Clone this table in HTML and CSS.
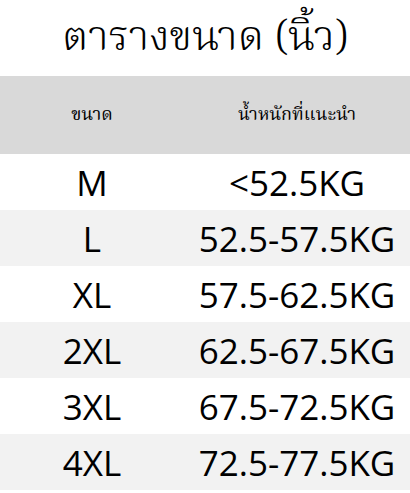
FILE: index.html
```html
<!DOCTYPE html>
<html lang="th">
<head>
<meta charset="utf-8">
<link rel="stylesheet" href="styles.css">
</head>
<body>
<div class="chart">
  <h1 class="title">ตารางขนาด (นิ้ว)</h1>
  <table class="sizes">
    <thead>
      <tr class="head"><th class="c1">ขนาด</th><th class="c2">น้ำหนักที่แนะนำ</th></tr>
    </thead>
    <tbody>
      <tr><td class="c1">M</td><td class="c2">&lt;52.5KG</td></tr>
      <tr class="alt"><td class="c1">L</td><td class="c2">52.5-57.5KG</td></tr>
      <tr><td class="c1">XL</td><td class="c2">57.5-62.5KG</td></tr>
      <tr class="alt"><td class="c1">2XL</td><td class="c2">62.5-67.5KG</td></tr>
      <tr><td class="c1">3XL</td><td class="c2">67.5-72.5KG</td></tr>
      <tr class="alt"><td class="c1">4XL</td><td class="c2">72.5-77.5KG</td></tr>
    </tbody>
  </table>
</div>
</body>
</html>
```
FILE: styles.css
```css
html, body {
  margin: 0;
  padding: 0;
  background: #ffffff;
}
.chart {
  width: 410px;
}
.title {
  margin: 0;
  height: 76px;
  display: flex;
  align-items: center;
  justify-content: center;
  font-family: "Norasi", "Kinnari", "Noto Serif Thai", "Liberation Serif", serif;
  font-weight: 350;
  font-size: 42px;
  color: #000;
}
.sizes {
  width: 100%;
  border-collapse: collapse;
  table-layout: fixed;
}
.c1 { width: 184px; }
.head {
  background: #d9d9d9;
}
.head th {
  height: 78px;
  padding: 0;
  font-family: "Norasi", "Kinnari", "Noto Serif Thai", "Liberation Serif", serif;
  font-weight: 400;
  font-size: 18px;
  color: #000;
  text-align: center;
}
.sizes td {
  height: 56px;
  padding: 0;
  text-align: center;
  font-family: "Open Sans", sans-serif;
  font-size: 35px;
  color: #000;
}
.alt {
  background: #f2f2f2;
}
```
